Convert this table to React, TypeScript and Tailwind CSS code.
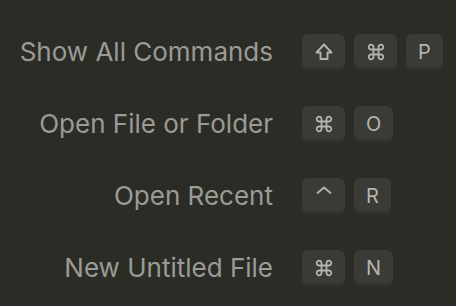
const rows: { label: string; keys: string[] }[] = [
  { label: 'Show All Commands', keys: ['shift', 'cmd', 'P'] },
  { label: 'Open File or Folder', keys: ['cmd', 'O'] },
  { label: 'Open Recent', keys: ['ctrl', 'R'] },
  { label: 'New Untitled File', keys: ['cmd', 'N'] },
];

function KeyCap({ k }: { k: string }) {
  let content: React.ReactNode = k;
  let icon = true;
  if (k === 'shift') {
    content = (
      <svg width="20" height="20" viewBox="0 0 20 20" fill="none" stroke="currentColor" strokeWidth="1.9" strokeLinejoin="round">
        <path d="M10 2.5 L17.5 10.5 H13.5 V17 H6.5 V10.5 H2.5 Z" />
      </svg>
    );
  } else if (k === 'cmd') {
    content = (
      <svg width="20" height="20" viewBox="0 0 20 20" fill="none" stroke="currentColor" strokeWidth="1.8">
        <path d="M7.5 7.5 H12.5 V12.5 H7.5 Z M7.5 7.5 V5.2 A2.4 2.4 0 1 0 5.2 7.5 H7.5 M12.5 7.5 V5.2 A2.4 2.4 0 1 1 14.8 7.5 H12.5 M7.5 12.5 V14.8 A2.4 2.4 0 1 1 5.2 12.5 H7.5 M12.5 12.5 V14.8 A2.4 2.4 0 1 0 14.8 12.5 H12.5" />
      </svg>
    );
  } else if (k === 'ctrl') {
    content = (
      <svg width="18" height="18" viewBox="0 0 18 18" fill="none" stroke="currentColor" strokeWidth="1.9" strokeLinecap="round" strokeLinejoin="round" className="-mt-[5px]">
        <path d="M2.5 9 L9 3.5 L15.5 9" />
      </svg>
    );
  } else {
    icon = false;
  }
  return (
    <div
      className={`flex h-[36px] items-center justify-center rounded-[6px] bg-[#3a3a36] pb-[1px] text-[20px] text-[#b4b4ae] shadow-[inset_0_-3px_0_#33332f] ${
        icon ? 'w-[43px]' : 'px-[12px]'
      }`}
    >
      {content}
    </div>
  );
}

export default function App() {
  return (
    <div
      className="flex h-[306px] w-[456px] flex-col gap-[36px] bg-[#2c2c27] pt-[34px]"
      style={{ fontFamily: 'Inter, "Liberation Sans", sans-serif' }}
    >
      {rows.map((row) => (
        <div key={row.label} className="flex h-[36px] items-center gap-[29px]">
          <div className="w-[273px] pb-[2px] text-right text-[26px] text-[#9b9b95]">{row.label}</div>
          <div className="flex gap-[9px]">
            {row.keys.map((k) => (
              <KeyCap key={k} k={k} />
            ))}
          </div>
        </div>
      ))}
    </div>
  );
}
